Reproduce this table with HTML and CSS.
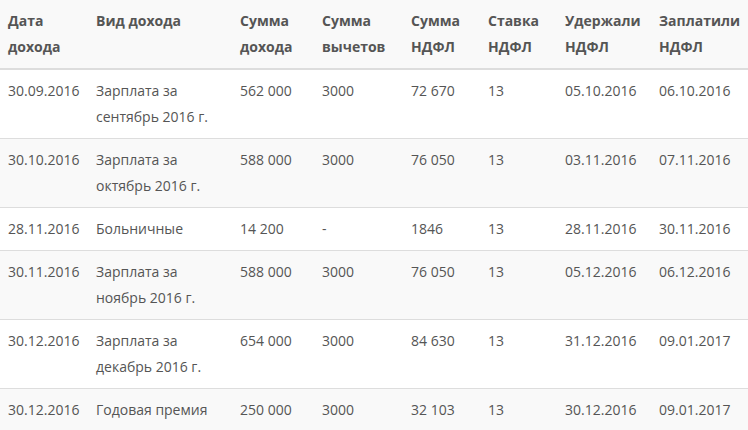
FILE: index.html
```html
<!DOCTYPE html>
<html lang="ru">
<head>
<meta charset="utf-8">
<link rel="stylesheet" href="styles.css">
</head>
<body>
<table class="ndfl">
  <colgroup>
    <col class="c1"><col class="c2"><col class="c3"><col class="c4"><col class="c5"><col class="c6"><col class="c7"><col class="c8">
  </colgroup>
  <thead>
    <tr>
      <th>Дата<br>дохода</th>
      <th>Вид дохода</th>
      <th>Сумма<br>дохода</th>
      <th>Сумма<br>вычетов</th>
      <th>Сумма<br>НДФЛ</th>
      <th>Ставка<br>НДФЛ</th>
      <th>Удержали<br>НДФЛ</th>
      <th>Заплатили<br>НДФЛ</th>
    </tr>
  </thead>
  <tbody>
    <tr>
      <td>30.09.2016</td><td>Зарплата за<br>сентябрь 2016 г.</td><td>562 000</td><td>3000</td><td>72 670</td><td>13</td><td>05.10.2016</td><td>06.10.2016</td>
    </tr>
    <tr>
      <td>30.10.2016</td><td>Зарплата за<br>октябрь 2016 г.</td><td>588 000</td><td>3000</td><td>76 050</td><td>13</td><td>03.11.2016</td><td>07.11.2016</td>
    </tr>
    <tr>
      <td>28.11.2016</td><td>Больничные</td><td>14 200</td><td>-</td><td>1846</td><td>13</td><td>28.11.2016</td><td>30.11.2016</td>
    </tr>
    <tr>
      <td>30.11.2016</td><td>Зарплата за<br>ноябрь 2016 г.</td><td>588 000</td><td>3000</td><td>76 050</td><td>13</td><td>05.12.2016</td><td>06.12.2016</td>
    </tr>
    <tr>
      <td>30.12.2016</td><td>Зарплата за<br>декабрь 2016 г.</td><td>654 000</td><td>3000</td><td>84 630</td><td>13</td><td>31.12.2016</td><td>09.01.2017</td>
    </tr>
    <tr>
      <td>30.12.2016</td><td>Годовая премия</td><td>250 000</td><td>3000</td><td>32 103</td><td>13</td><td>30.12.2016</td><td>09.01.2017</td>
    </tr>
  </tbody>
</table>
</body>
</html>
```
FILE: styles.css
```css
html, body {
  margin: 0;
  padding: 0;
  background: #ffffff;
}
body {
  font-family: "Open Sans", "Liberation Sans", sans-serif;
  font-size: 14px;
  color: #555555;
  overflow: hidden;
}
.ndfl {
  border-collapse: collapse;
  table-layout: fixed;
  width: 760px;
}
.c1 { width: 88px; }
.c2 { width: 144px; }
.c3 { width: 82px; }
.c4 { width: 89px; }
.c5 { width: 77px; }
.c6 { width: 77px; }
.c7 { width: 94px; }
.c8 { width: 109px; }
.ndfl th,
.ndfl td {
  padding: 8px;
  line-height: 26px;
  text-align: left;
  vertical-align: top;
  white-space: nowrap;
}
.ndfl th {
  font-weight: 700;
  color: #555555;
  background: #f9f9f9;
  border-bottom: 2px solid #dddddd;
}
.ndfl td {
  border-bottom: 1px solid #dddddd;
}
.ndfl tbody tr:nth-child(even) td {
  background: #f9f9f9;
}
```
